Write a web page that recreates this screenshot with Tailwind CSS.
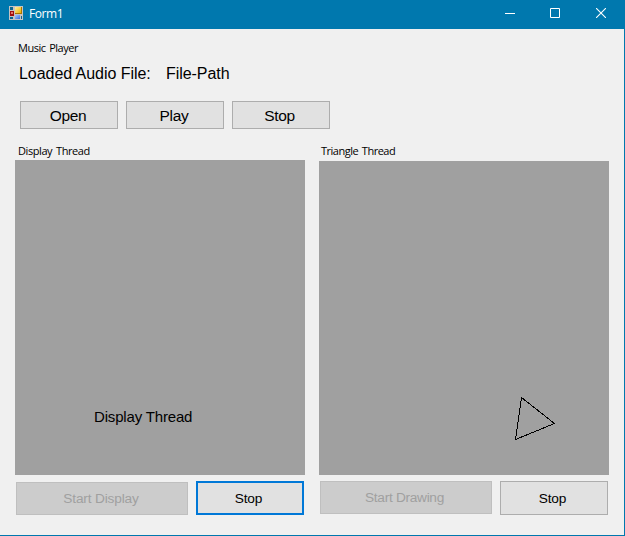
<!DOCTYPE html>
<html lang="en">
<head>
<meta charset="utf-8">
<title>Form1</title>
<script src="https://cdn.jsdelivr.net/npm/@tailwindcss/browser@4"></script>
</head>
<body class="w-[625px] h-[536px] overflow-hidden bg-[#f0f0f0] text-black font-['Liberation_Sans',Arial,sans-serif] whitespace-nowrap">
<div class="w-full h-full flex flex-col border-r border-b border-[#0078ae]">
  <header class="h-[29px] shrink-0 bg-[#0078ae] flex items-center pl-[9px] text-white">
    <svg class="w-[14px] h-[14px] mr-[6px] -mt-[3px]" viewBox="0 0 14 14" shape-rendering="crispEdges">
      <defs>
        <linearGradient id="y" x1="0" y1="0" x2="1" y2="1"><stop offset="0" stop-color="#fff0a0"/><stop offset="1" stop-color="#eeb000"/></linearGradient>
        <linearGradient id="b" x1="0" y1="0" x2="1" y2="1"><stop offset="0" stop-color="#a8c8ff"/><stop offset="1" stop-color="#3a70dc"/></linearGradient>
      </defs>
      <path fill="#c4c4c4" d="M0 0h14v14H0z"/>
      <path fill="#0e6690" d="M1 1h3v3H1zM1 11h3v2H1zM12 10h1v3h-1z"/>
      <path fill="#a01010" d="M1 5h4v5H1z"/><path fill="#e87868" d="M2 6h2v2H2z"/>
      <path fill="#a87400" d="M6 1h7v7H6z"/><path fill="url(#y)" d="M6 1h6v6H6z"/>
      <path fill="url(#b)" d="M6 9h5v4H6z"/>
    </svg>
    <span class="text-[12px] leading-[16px] -mt-[1px] tracking-[-0.45px] font-['Open_Sans',sans-serif]">Form1</span>
    <div class="ml-auto mr-[18px] flex items-center -mt-[3px]">
      <svg class="w-[10px] h-[10px] mr-[35px]" viewBox="0 0 10 10" shape-rendering="crispEdges"><path fill="#fff" d="M0 5h10v1H0z"/></svg>
      <svg class="w-[10px] h-[10px] mr-[36px]" viewBox="0 0 10 10"><path d="M.5.5h9v9h-9z" fill="none" stroke="#fff"/></svg>
      <svg class="w-[10px] h-[10px]" viewBox="0 0 10 10"><path d="M0 0l10 10M10 0L0 10" stroke="#fff" stroke-width="1.1"/></svg>
    </div>
  </header>

  <main class="flex flex-col pt-[11px]">
    <p class="pl-[18px] text-[11px] leading-[16px] tracking-[-0.5px] [word-spacing:1.4px] font-['Open_Sans',sans-serif]">Music Player</p>
    <div class="pl-[19px] mt-[8px] flex text-[16px] leading-[20px] tracking-[-0.05px]">
      <span class="w-[147px]">Loaded Audio File:</span>
      <span>File-Path</span>
    </div>
    <div class="pl-[20px] mt-[17px] flex gap-[8px] text-[15.5px] tracking-[-0.3px]">
      <button class="w-[98px] h-[28px] bg-[#e1e1e1] border border-[#adadad] pr-[2px] pt-[2px] leading-[24px]">Open</button>
      <button class="w-[98px] h-[28px] bg-[#e1e1e1] border border-[#adadad] pr-[2px] pt-[2px] leading-[24px]">Play</button>
      <button class="w-[98px] h-[28px] bg-[#e1e1e1] border border-[#adadad] pr-[3px] pt-[2px] leading-[24px]">Stop</button>
    </div>

    <div class="mt-[14px] pl-[15px] flex gap-[14px]">
      <section class="w-[290px] flex flex-col">
        <h2 class="h-[17px] pl-[3px] text-[11px] leading-[16px] tracking-[-0.42px] [word-spacing:1.4px] font-['Open_Sans',sans-serif]">Display Thread</h2>
        <div class="h-[315px] bg-[#a0a0a0] pt-[247px] pl-[79px] text-[15px] leading-[20px] tracking-[-0.17px]">Display Thread</div>
        <div class="mt-[6px] pl-[1px] flex gap-[8px] text-[13.7px] tracking-[-0.17px]">
          <button class="mt-[1px] w-[172px] h-[33px] bg-[#cccccc] border border-[#bfbfbf] text-[#a0a0a0] pr-[2px] pt-[2px]" disabled>Start Display</button>
          <button class="w-[108px] h-[34px] bg-[#e1e1e1] border-2 border-[#0078d7] pr-[3px] pt-[3px]">Stop</button>
        </div>
      </section>
      <section class="w-[290px] flex flex-col">
        <h2 class="h-[18px] pl-[2px] text-[11px] leading-[16px] tracking-[-0.5px] [word-spacing:1.4px] font-['Open_Sans',sans-serif]">Triangle Thread</h2>
        <div class="h-[314px] bg-[#a0a0a0]">
          <svg class="w-[290px] h-[314px]" viewBox="319 161 290 314" shape-rendering="crispEdges"><path d="M521.5 397.5L554.5 423.5L515.5 439.5Z" fill="none" stroke="#000"/></svg>
        </div>
        <div class="mt-[6px] pl-[1px] flex gap-[8px] text-[13.7px] tracking-[-0.17px]">
          <button class="w-[172px] h-[33px] bg-[#cccccc] border border-[#bfbfbf] text-[#a0a0a0] pr-[3px] pt-[2px] tracking-[-0.3px]" disabled>Start Drawing</button>
          <button class="w-[108px] h-[34px] bg-[#e1e1e1] border border-[#adadad] pr-[3px] pt-[3px]">Stop</button>
        </div>
      </section>
    </div>
  </main>
</div>
</body>
</html>
